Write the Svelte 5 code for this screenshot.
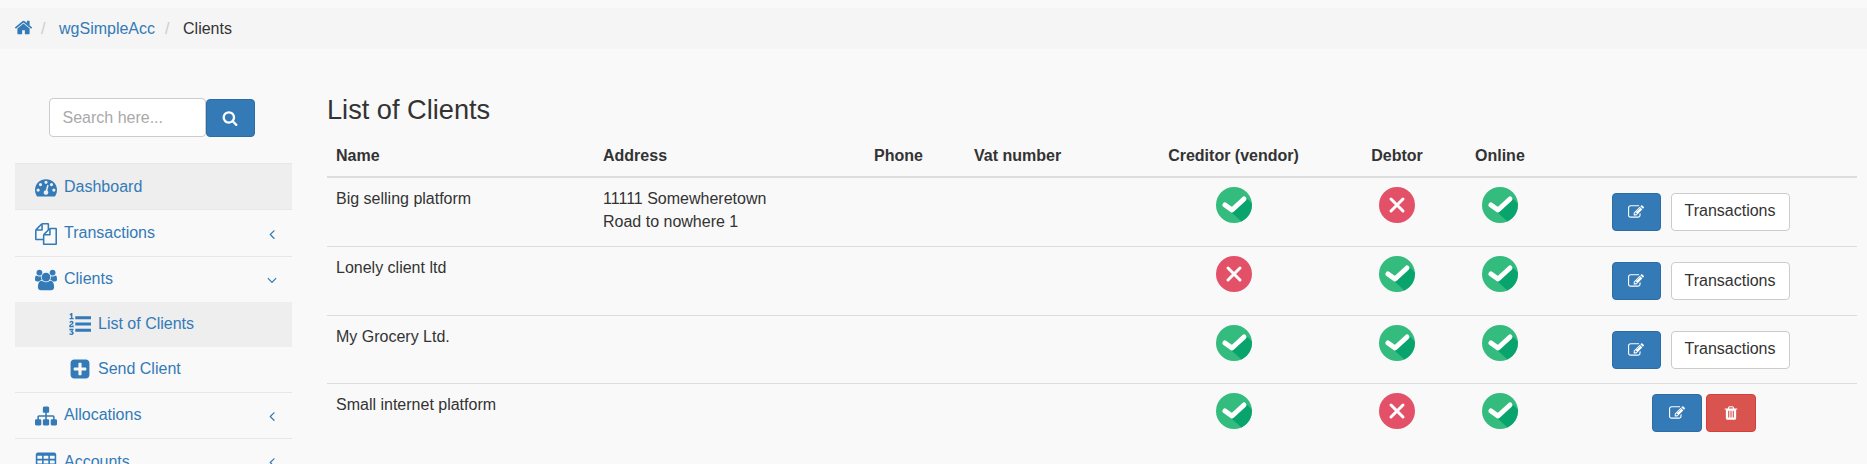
<script>
  const paths = {
    home: 'M1472 992v480q0 26-19 45t-45 19h-384v-384h-256v384h-384q-26 0-45-19t-19-45v-480q0-1 .5-3t.5-3l575-474 575 474q1 2 1 6zm223-69l-62 74q-8 9-21 11h-3q-13 0-21-7l-692-577-692 577q-12 8-24 7-13-2-21-11l-62-74q-8-10-7-23.5t11-21.5l719-599q32-26 76-26t76 26l244 204v-195q0-14 9-23t23-9h192q14 0 23 9t9 23v408l219 182q10 8 11 21.5t-7 23.5z',
    search: 'M1216 832q0-185-131.500-316.500t-316.500-131.500-316.500 131.500-131.500 316.500 131.500 316.500 316.500 131.500 316.500-131.500 131.500-316.500zm512 832q0 52-38 90t-90 38q-54 0-90-38l-343-342q-179 124-399 124-143 0-273.500-55.500t-225-150-150-225-55.500-273.500 55.500-273.500 150-225 225-150 273.500-55.500 273.500 55.500 225 150 150 225 55.500 273.500q0 220-124 399l343 343q37 37 37 90z',
    left: 'M1203 544q0 13-10 23l-393 393 393 393q10 10 10 23t-10 23l-50 50q-10 10-23 10t-23-10l-466-466q-10-10-10-23t10-23l466-466q10-10 23-10t23 10l50 50q10 10 10 23z',
    down: 'M1395 736q0 13-10 23l-466 466q-10 10-23 10t-23-10l-466-466q-10-10-10-23t10-23l50-50q10-10 23-10t23 10l393 393 393-393q10-10 23-10t23 10l50 50q10 10 10 23z',
    plus: 'M1408 960v-128q0-26-19-45t-45-19h-320v-320q0-26-19-45t-45-19h-128q-26 0-45 19t-19 45v320h-320q-26 0-45 19t-19 45v128q0 26 19 45t45 19h320v320q0 26 19 45t45 19h128q26 0 45-19t19-45v-320h320q26 0 45-19t19-45zm256-544v960q0 119-84.500 203.500t-203.500 84.500h-960q-119 0-203.500-84.500t-84.500-203.500v-960q0-119 84.500-203.500t203.500-84.500h960q119 0 203.500 84.500t84.500 203.500z',
    trash: 'M704 1376v-704q0-14-9-23t-23-9h-64q-14 0-23 9t-9 23v704q0 14 9 23t23 9h64q14 0 23-9t9-23zm256 0v-704q0-14-9-23t-23-9h-64q-14 0-23 9t-9 23v704q0 14 9 23t23 9h64q14 0 23-9t9-23zm256 0v-704q0-14-9-23t-23-9h-64q-14 0-23 9t-9 23v704q0 14 9 23t23 9h64q14 0 23-9t9-23zm-544-992h448l-48-117q-7-9-17-11h-317q-10 2-17 11zm928 32v64q0 14-9 23t-23 9h-96v948q0 83-47 143.500t-113 60.500h-832q-66 0-113-58.500t-47-141.500v-952h-96q-14 0-23-9t-9-23v-64q0-14 9-23t23-9h309l70-167q15-37 54-63t79-26h320q40 0 79 26t54 63l70 167h309q14 0 23 9t9 23z',
    edit: 'M888 1184l116-116-152-152-116 116v56h96v96h56zm440-720q-16-16-33 1l-350 350q-17 17-1 33t33-1l350-350q17-17 1-33zm80 594v190q0 119-84.500 203.500t-203.500 84.500h-832q-119 0-203.500-84.500t-84.500-203.500v-832q0-119 84.500-203.500t203.500-84.500h832q63 0 117 25 15 7 18 23 3 17-9 29l-49 49q-14 14-32 8-23-6-45-6h-832q-66 0-113 47t-47 113v832q0 66 47 113t113 47h832q66 0 113-47t47-113v-126q0-13 9-22l64-64q15-15 35-7t20 29zm-96-738l288 288-672 672h-288v-288zm444 132l-92 92-288-288 92-92q28-28 68-28t68 28l152 152q28 28 28 68t-28 68z',
    users: 'M593 896q-162 5-265 128h-134q-82 0-138-40.500t-56-118.500q0-353 124-353 6 0 43.500 21t97.500 42.500 119 21.500q67 0 133-23-5 37-5 66 0 139 81 256zm1071 637q0 120-73 189.500t-194 69.500h-874q-121 0-194-69.500t-73-189.500q0-53 3.500-103.500t14-109 26.500-108.500 43-97.500 62-81 85.500-53.500 111.500-20q10 0 43 21.500t73 48 107 48 135 21.500 135-21.500 107-48 73-48 43-21.500q61 0 111.500 20t85.500 53.500 62 81 43 97.500 26.500 108.500 14 109 3.500 103.500zm-1024-1277q0 106-75 181t-181 75-181-75-75-181 75-181 181-75 181 75 75 181zm704 384q0 159-112.500 271.500t-271.500 112.500-271.500-112.500-112.500-271.500 112.500-271.500 271.500-112.500 271.500 112.500 112.500 271.500zm576 225q0 78-56 118.500t-138 40.500h-134q-103-123-265-128 81-117 81-256 0-29-5-66 66 23 133 23 59 0 119-21.500t97.500-42.500 43.500-21q124 0 124 353zm-128-609q0 106-75 181t-181 75-181-75-75-181 75-181 181-75 181 75 75 181z',
    dashboard: 'M384 1152q0-53-37.500-90.500t-90.500-37.500-90.500 37.500-37.500 90.500 37.500 90.500 90.500 37.500 90.500-37.500 37.500-90.500zm192-448q0-53-37.500-90.500t-90.500-37.500-90.500 37.500-37.500 90.500 37.500 90.500 90.500 37.500 90.500-37.500 37.500-90.500zm428 481l101-382q6-26-7.500-48.500t-38.500-29.500-48 6.500-30 39.500l-101 382q-60 5-107 43.500t-63 98.500q-20 77 20 146t117 89 146-20 89-117q16-60-6-117t-72-91zm660-33q0-53-37.500-90.500t-90.500-37.500-90.500 37.500-37.500 90.500 37.500 90.500 90.500 37.500 90.500-37.500 37.500-90.500zm-640-640q0-53-37.500-90.500t-90.500-37.500-90.500 37.500-37.500 90.500 37.500 90.500 90.500 37.500 90.500-37.500 37.500-90.500zm448 192q0-53-37.500-90.500t-90.500-37.500-90.500 37.500-37.500 90.500 37.500 90.500 90.500 37.500 90.500-37.500 37.500-90.500zm320 448q0 261-141 483-19 29-54 29h-1402q-35 0-54-29-141-221-141-483 0-182 71-348t191-286 286-191 348-71 348 71 286 191 191 286 71 348z',
    files: 'M1696 384q40 0 68 28t28 68v1216q0 40-28 68t-68 28h-960q-40 0-68-28t-28-68v-288h-544q-40 0-68-28t-28-68v-672q0-40 20-88t48-76l408-408q28-28 76-48t88-20h416q40 0 68 28t28 68v328q68-40 128-40h416zm-544 213l-299 299h299v-299zm-640-384l-299 299h299v-299zm196 647l316-316v-416h-384v416q0 40-28 68t-68 28h-416v640h512v-256q0-40 20-88t48-76zm956 804v-1152h-384v416q0 40-28 68t-68 28h-416v640h896z',
    sitemap: 'M1792 1248v320q0 40-28 68t-68 28h-320q-40 0-68-28t-28-68v-320q0-40 28-68t68-28h96v-192h-512v192h96q40 0 68 28t28 68v320q0 40-28 68t-68 28h-320q-40 0-68-28t-28-68v-320q0-40 28-68t68-28h96v-192h-512v192h96q40 0 68 28t28 68v320q0 40-28 68t-68 28h-320q-40 0-68-28t-28-68v-320q0-40 28-68t68-28h96v-192q0-52 38-90t90-38h512v-192h-96q-40 0-68-28t-28-68v-320q0-40 28-68t68-28h320q40 0 68 28t28 68v320q0 40-28 68t-68 28h-96v192h512q52 0 90 38t38 90v192h96q40 0 68 28t28 68z',
    table: 'M576 1376v-192q0-14-9-23t-23-9h-320q-14 0-23 9t-9 23v192q0 14 9 23t23 9h320q14 0 23-9t9-23zm0-384v-192q0-14-9-23t-23-9h-320q-14 0-23 9t-9 23v192q0 14 9 23t23 9h320q14 0 23-9t9-23zm512 384v-192q0-14-9-23t-23-9h-320q-14 0-23 9t-9 23v192q0 14 9 23t23 9h320q14 0 23-9t9-23zm-512-768v-192q0-14-9-23t-23-9h-320q-14 0-23 9t-9 23v192q0 14 9 23t23 9h320q14 0 23-9t9-23zm512 384v-192q0-14-9-23t-23-9h-320q-14 0-23 9t-9 23v192q0 14 9 23t23 9h320q14 0 23-9t9-23zm512 384v-192q0-14-9-23t-23-9h-320q-14 0-23 9t-9 23v192q0 14 9 23t23 9h320q14 0 23-9t9-23zm-512-768v-192q0-14-9-23t-23-9h-320q-14 0-23 9t-9 23v192q0 14 9 23t23 9h320q14 0 23-9t9-23zm512 384v-192q0-14-9-23t-23-9h-320q-14 0-23 9t-9 23v192q0 14 9 23t23 9h320q14 0 23-9t9-23zm0-384v-192q0-14-9-23t-23-9h-320q-14 0-23 9t-9 23v192q0 14 9 23t23 9h320q14 0 23-9t9-23zm128-320v1088q0 66-47 113t-113 47h-1344q-66 0-113-47t-47-113v-1088q0-66 47-113t113-47h1344q66 0 113 47t47 113z',
    listol: 'M381 1620q0 80-54.500 126t-135.500 46q-106 0-172-66l57-88q49 45 106 45 29 0 50.500-14.500t21.500-42.500q0-64-105-56l-26-56q8-10 32.500-43.500t42.500-54 37-38.500v-1q-16 0-48.500 1t-48.500 1v53h-106v-152h333v88l-95 115q51 12 81 49t30 88zm2-627v159h-362q-6-36-6-54 0-51 23.500-93t56.500-68 66-47.500 56.500-43.500 23.500-45q0-25-14.500-38.500t-39.500-13.500q-46 0-81 58l-85-59q24-51 71.500-79.500t105.500-28.500q73 0 123 41.500t50 112.500q0 50-34 91.500t-75 64.500-75.500 50.500-35.500 52.500h127v-60h105zm1409 319v192q0 13-9.500 22.500t-22.500 9.500h-1216q-13 0-22.500-9.500t-9.500-22.500v-192q0-14 9-23t23-9h1216q13 0 22.500 9.500t9.500 22.500zm-1408-899v99h-335v-99h107q0-41 .5-122t.5-121v-12h-2q-8 17-50 54l-71-76 136-127h106v404h108zm1408 387v192q0 13-9.500 22.500t-22.500 9.500h-1216q-13 0-22.500-9.500t-9.500-22.500v-192q0-14 9-23t23-9h1216q13 0 22.500 9.500t9.500 22.500zm0-512v192q0 13-9.500 22.500t-22.500 9.500h-1216q-13 0-22.500-9.500t-9.500-22.500v-192q0-13 9.500-22.500t22.500-9.500h1216q13 0 22.500 9.500t9.500 22.500z'
  };

  const nav = [
    { label: 'Dashboard', icon: 'dashboard', active: true },
    { label: 'Transactions', icon: 'files', arrow: 'left' },
    {
      label: 'Clients',
      icon: 'users',
      arrow: 'down',
      children: [
        { label: 'List of Clients', icon: 'listol', active: true },
        { label: 'Send Client', icon: 'plus' }
      ]
    },
    { label: 'Allocations', icon: 'sitemap', arrow: 'left' },
    { label: 'Accounts', icon: 'table', arrow: 'left' }
  ];

  const clients = [
    { name: 'Big selling platform', address: ['11111 Somewheretown', 'Road to nowhere 1'], creditor: true, debtor: false, online: true, used: true },
    { name: 'Lonely client ltd', address: [], creditor: false, debtor: true, online: true, used: true },
    { name: 'My Grocery Ltd.', address: [], creditor: true, debtor: true, online: true, used: true },
    { name: 'Small internet platform', address: [], creditor: true, debtor: false, online: true, used: false }
  ];
</script>

{#snippet icon(name, cls)}
  <svg class="icon {cls}" viewBox={name === 'users' ? '0 0 1920 1792' : '0 0 1792 1792'} aria-hidden="true">
    <path d={paths[name]} fill="currentColor" />
  </svg>
{/snippet}

{#snippet status(ok)}
  <svg class="status" viewBox="0 0 36 36" aria-label={ok ? 'yes' : 'no'}>
    {#if ok}
      <circle cx="18" cy="18" r="18" fill="#34bb7e" />
      <path d="M15 25 L25.5 34.4 A18 18 0 0 0 35.8 16.3 L29.5 10 Z" fill="#09a46e" />
      <path d="M9 18 L16 23 L28 12" fill="none" stroke="#fff" stroke-width="5" stroke-linecap="round" stroke-linejoin="round" />
    {:else}
      <circle cx="18" cy="18" r="18" fill="#e35168" />
      <path d="M12 12 L24 24 M24 12 L12 24" stroke="#fff" stroke-width="3" stroke-linecap="round" />
    {/if}
  </svg>
{/snippet}

<div class="page">
  <ol class="breadcrumb">
    <li><a href="#home">{@render icon('home', 'home')}</a></li>
    <li class="sep">/</li>
    <li><a href="#app">wgSimpleAcc</a></li>
    <li class="sep">/</li>
    <li class="current">Clients</li>
  </ol>

  <div class="layout">
    <aside class="sidebar">
      <form class="search" onsubmit={(e) => e.preventDefault()}>
        <input type="text" placeholder="Search here..." />
        <button class="btn primary search-btn" type="submit" aria-label="Search">{@render icon('search', 'search-icon')}</button>
      </form>

      <ul class="nav">
        {#each nav as item}
          <li class="nav-item">
            <a href="#nav" class="nav-link" class:active={item.active}>
              {@render icon(item.icon, 'nav-icon')}
              <span>{item.label}</span>
              {#if item.arrow}
                {@render icon(item.arrow, 'arrow')}
              {/if}
            </a>
            {#if item.children}
              <ul class="subnav">
                {#each item.children as child}
                  <li>
                    <a href="#nav" class="nav-link sub" class:active={child.active}>
                      {@render icon(child.icon, 'nav-icon')}
                      <span>{child.label}</span>
                    </a>
                  </li>
                {/each}
              </ul>
            {/if}
          </li>
        {/each}
      </ul>
    </aside>

    <main class="content">
      <h3>List of Clients</h3>
      <table>
        <colgroup>
          <col style="width: 268px" />
          <col style="width: 271px" />
          <col style="width: 100px" />
          <col style="width: 174px" />
          <col style="width: 187px" />
          <col style="width: 140px" />
          <col style="width: 65px" />
          <col />
        </colgroup>
        <thead>
          <tr>
            <th>Name</th>
            <th>Address</th>
            <th>Phone</th>
            <th>Vat number</th>
            <th class="center">Creditor (vendor)</th>
            <th class="center">Debtor</th>
            <th class="center">Online</th>
            <th></th>
          </tr>
        </thead>
        <tbody>
          {#each clients as c}
            <tr>
              <td class="text">{c.name}</td>
              <td class="text">
                {#each c.address as line}
                  <div>{line}</div>
                {/each}
              </td>
              <td></td>
              <td></td>
              <td class="center">{@render status(c.creditor)}</td>
              <td class="center">{@render status(c.debtor)}</td>
              <td class="center">{@render status(c.online)}</td>
              <td class="actions">
                {#if c.used}
                  <div class="btn-row used">
                    <button class="btn primary edit" type="button" aria-label="Edit">{@render icon('edit', 'btn-icon')}</button>
                    <button class="btn default" type="button">Transactions</button>
                  </div>
                {:else}
                  <div class="btn-row">
                    <button class="btn primary edit" type="button" aria-label="Edit">{@render icon('edit', 'btn-icon')}</button>
                    <button class="btn danger edit" type="button" aria-label="Delete">{@render icon('trash', 'btn-icon')}</button>
                  </div>
                {/if}
              </td>
            </tr>
          {/each}
        </tbody>
      </table>
    </main>
  </div>
</div>

<style>
  :global(body) {
    margin: 0;
    background: #f9f9f9;
    overflow: hidden;
  }

  .page {
    height: 464px;
    overflow: hidden;
    padding-top: 8px;
    box-sizing: border-box;
    font-family: 'Liberation Sans', Arial, sans-serif;
    font-size: 16px;
    line-height: 1.42857;
    color: #333;
  }

  a {
    color: #337ab7;
    text-decoration: none;
  }

  .icon {
    display: block;
    flex: none;
  }

  /* Breadcrumb */
  .breadcrumb {
    display: flex;
    align-items: center;
    height: 41px;
    box-sizing: border-box;
    margin: 0;
    padding: 1px 14px 0;
    list-style: none;
    background: #f5f5f5;
  }

  .sep {
    color: #ccc;
    width: 26px;
    padding-left: 8px;
    box-sizing: border-box;
  }

  .home {
    width: 19px;
    height: 19px;
    margin-top: -3px;
  }

  .breadcrumb li:nth-child(3) {
    margin-right: 2px;
  }

  /* Sidebar */
  .layout {
    display: flex;
    align-items: flex-start;
  }

  .sidebar {
    flex: none;
    width: 277px;
    margin: 0 35px 0 15px;
    padding-top: 49px;
  }

  .search {
    display: flex;
    justify-content: center;
    margin: 0 0 26px -4px;
  }

  .search input {
    width: 157px;
    height: 39px;
    box-sizing: border-box;
    padding: 6px 13px;
    border: 1px solid #ccc;
    border-radius: 4px;
    background: #fff;
    font: inherit;
    color: #555;
  }

  .search input::placeholder {
    color: #a9a9a9;
    opacity: 1;
  }

  .search-btn {
    width: 49px;
    height: 38px;
    margin-top: 1px;
    padding: 0;
    justify-content: center;
  }

  .search-icon {
    width: 16px;
    height: 16px;
  }

  .nav,
  .subnav {
    margin: 0;
    padding: 0;
    list-style: none;
  }

  .nav {
    border-top: 1px solid #e7e7e7;
  }

  .nav-item {
    border-bottom: 1px solid #e7e7e7;
  }

  .nav-link {
    display: flex;
    align-items: center;
    gap: 7px;
    padding: 11.75px 12px 10.75px 20px;
  }

  .nav-link.sub {
    padding: 11px 12px 11px 54px;
  }

  .nav-link.active {
    background: #eee;
  }

  .nav-link :global(.nav-icon) {
    width: 22px;
    height: 22px;
  }

  .nav-link :global(.arrow) {
    width: 16px;
    height: 16px;
    margin-left: auto;
  }

  /* Content */
  .content {
    flex: 1;
    min-width: 0;
    padding-right: 10px;
  }

  h3 {
    margin: 46px 0 12px;
    font-size: 27.2px;
    font-weight: 400;
    line-height: 1.1;
  }

  table {
    width: 100%;
    table-layout: fixed;
    border-collapse: collapse;
  }

  th,
  td {
    padding: 8px;
    text-align: left;
    vertical-align: top;
  }

  th {
    font-weight: 700;
    border-bottom: 2px solid #ddd;
  }

  td {
    padding: 9px 8px 7px;
    border-top: 1px solid #ddd;
  }

  td.text {
    padding-top: 10px;
  }

  th:first-child,
  td:first-child {
    padding-left: 9px;
  }

  tbody tr:first-child td {
    border-top: 0;
  }

  th.center,
  td.center {
    text-align: center;
  }

  .status {
    display: inline-block;
    vertical-align: top;
    width: 36px;
    height: 36px;
  }

  td.actions {
    padding-left: 28px;
  }

  .btn-row {
    display: flex;
    justify-content: center;
    gap: 4px;
    padding: 1px 2px 0 0;
  }

  .btn-row.used {
    gap: 10px;
    padding: 6px 8px 7.5px 0;
  }

  tbody tr:first-child .btn-row.used {
    padding-bottom: 8.5px;
  }

  .btn {
    display: inline-flex;
    align-items: center;
    height: 38px;
    box-sizing: border-box;
    padding: 6px 13px;
    border: 1px solid transparent;
    border-radius: 4px;
    font: inherit;
  }

  .edit {
    width: 50px;
    justify-content: center;
    padding: 0;
  }

  .used .edit {
    width: 49px;
  }

  .primary {
    background: #337ab7;
    border-color: #2e6da4;
    color: #fff;
  }

  .danger {
    background: #d9534f;
    border-color: #d43f3a;
    color: #fff;
  }

  .default {
    background: #fff;
    border-color: #ccc;
    color: #333;
  }

  .btn-icon {
    width: 16px;
    height: 16px;
  }
</style>
